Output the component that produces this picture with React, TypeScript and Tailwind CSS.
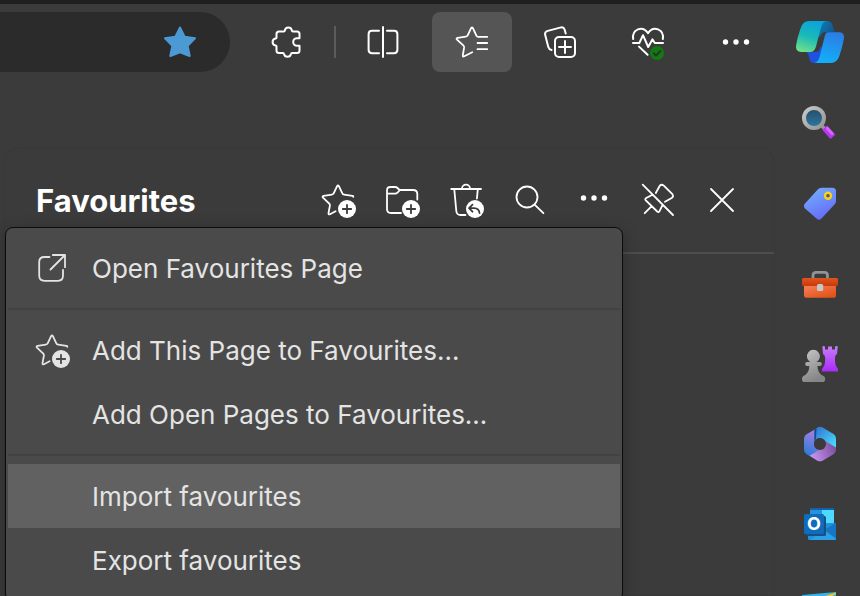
import type { ReactNode } from 'react';

const Icon = ({ children, width = 1.8 }: { children: ReactNode; width?: number }) => (
  <svg
    viewBox="0 0 40 40"
    className="size-10 shrink-0"
    fill="none"
    stroke="currentColor"
    strokeWidth={width}
    strokeLinecap="round"
    strokeLinejoin="round"
    aria-hidden="true"
  >
    {children}
  </svg>
);

const AppIcon = ({ children }: { children: ReactNode }) => (
  <svg viewBox="0 0 48 48" className="size-12" aria-hidden="true">
    {children}
  </svg>
);

const StarAdd = ({ plus }: { plus: string }) => (
  <Icon>
    <path d="M35.2 16.8Q35.6 16 34.4 15.8L26.2 14.7Q24.8 14.5 24.2 13.2L20.9 6.2Q20 4.6 19.1 6.2L15.8 13.2Q15.2 14.5 13.8 14.7L5.6 15.9Q3.8 16.3 5 17.6L11 23.3Q12.1 24.2 11.9 25.6L10.5 33.2Q10.3 35 12 34.2L17.6 31.2" />
    <circle cx="29" cy="29" r="9" fill="currentColor" stroke="none" />
    <path d="M29 24.8V33.2M24.8 29H33.2" stroke={plus} />
  </Icon>
);

const Dots = () => (
  <Icon>
    <g fill="currentColor" stroke="none">
      <circle cx="9.5" cy="20" r="2.7" />
      <circle cx="20" cy="20" r="2.7" />
      <circle cx="30.5" cy="20" r="2.7" />
    </g>
  </Icon>
);

const ToolButton = ({ label, active, children }: { label: string; active?: boolean; children: ReactNode }) => (
  <button
    type="button"
    aria-label={label}
    className={
      active
        ? 'flex h-[60px] w-20 shrink-0 items-center justify-center rounded-lg bg-[#555555]'
        : 'flex h-[60px] w-20 shrink-0 items-center justify-center rounded-lg'
    }
  >
    {children}
  </button>
);

const PanelButton = ({ label, children }: { label: string; children: ReactNode }) => (
  <button type="button" aria-label={label} className="flex h-16 w-16 shrink-0 items-center justify-center">
    {children}
  </button>
);

const SideButton = ({ label, children }: { label: string; children: ReactNode }) => (
  <button type="button" aria-label={label} className="shrink-0">
    <AppIcon>{children}</AppIcon>
  </button>
);

const MenuItem = ({ label, icon, active }: { label: string; icon?: ReactNode; active?: boolean }) => (
  <button
    type="button"
    role="menuitem"
    className={
      active
        ? 'flex h-16 w-full items-center gap-5 bg-[#616161] pl-6 text-left'
        : 'flex h-16 w-full items-center gap-5 pl-6 text-left'
    }
  >
    <span className="size-10 shrink-0">{icon}</span>
    <span className="pt-0.5 text-[26px] leading-8 whitespace-nowrap">{label}</span>
  </button>
);

const Separator = () => <hr className="my-2 h-0.5 border-0 bg-[#3f4346]" />;

const Toolbar = () => (
  <div className="flex items-center gap-2 pt-2 pr-1">
    <div className="flex h-[60px] flex-1 items-center justify-end rounded-r-full bg-[#2b2b2b] pr-[30px]">
      <button type="button" aria-label="Edit favourite" className="text-[#4c9ad4]">
        <Icon width={2}>
          <path
            d="M20 5.5L24.6 14.7L35 16.2L27.7 23.8L29.7 34L20 30.2L10.3 34L12.3 23.8L5 16.2L15.4 14.7Z"
            fill="currentColor"
          />
        </Icon>
      </button>
    </div>
    <div className="flex items-center pr-px pl-[9px]">
      <ToolButton label="Extensions">
        <Icon width={2}>
          <path d="M12 9.5H16.8Q17.7 9.5 17.8 8.6A3.6 3.6 0 0 1 24.9 8.6Q25 9.5 25.9 9.5H30Q32.5 9.5 32.5 12V16.2H30A3.8 3.8 0 0 0 30 23.8H32.5V28.5Q32.5 31 30 31H25Q24.1 31 24 31.9A3.6 3.6 0 0 1 17 31.9Q16.9 31 16 31H12Q9.5 31 9.5 28.5V24.6Q9.5 23.7 8.6 23.6A3.6 3.6 0 0 1 8.6 16.5Q9.5 16.4 9.5 15.5V12Q9.5 9.5 12 9.5Z" />
        </Icon>
      </ToolButton>
      <div className="mx-[7px] h-8 w-0.5 bg-[#5c5c5c]" />
      <ToolButton label="Split screen">
        <Icon width={2}>
          <path d="M16 8.8H9Q5.6 8.8 5.6 12.2V27.8Q5.6 31.2 9 31.2H16M24 8.8H31Q34.4 8.8 34.4 12.2V27.8Q34.4 31.2 31 31.2H24M20 5V35" />
        </Icon>
      </ToolButton>
    </div>
    <ToolButton label="Favourites" active>
      <Icon>
        <path d="M35.2 14.9H26.3Q25 14.9 24.4 13.7L20.9 6.2Q20 4.6 19.1 6.2L15.8 13.2Q15.2 14.5 13.8 14.7L5.6 15.9Q3.8 16.3 5 17.6L11.3 23.4Q12.3 24.3 12.1 25.7L10.8 33.4Q10.6 35.2 12.3 34.3L20.2 30.2M25.5 21H35.2M25.5 27.2H35.2" />
      </Icon>
    </ToolButton>
    <ToolButton label="Collections">
      <Icon width={2}>
        <rect x="15" y="15" width="20" height="20" rx="4" />
        <path d="M25 19V31M19 25H31M25.7 11.5L24.6 7.5Q23.7 4.8 21 5.4L7.8 8.9Q4.4 9.9 5.2 13L8.3 25Q9 27.5 11.6 28" />
      </Icon>
    </ToolButton>
    <ToolButton label="Browser essentials">
      <Icon width={2}>
        <path d="M5.2 17C3.6 7.2 14.6 3 20 11.2C25.4 3 36.4 7.2 34.8 17M5 21H11.3L15 13.2L20.2 25L24.4 17.4L26.8 21H35M11 24.6L19.6 32.8" />
        <circle cx="29" cy="31" r="7" fill="#107c10" stroke="none" />
        <path d="M25.7 31.2L28 33.5L32.5 29" stroke="#303030" />
      </Icon>
    </ToolButton>
    <ToolButton label="Settings and more">
      <Dots />
    </ToolButton>
  </div>
);

const PanelHeader = () => (
  <div className="flex h-[106px] items-center border-b-2 border-[#4d4d4d] pr-5 pl-[31px]">
    <h1 className="flex-1 pt-0.5 text-[31px] leading-10 font-bold">Favourites</h1>
    <PanelButton label="Add this page to favourites">
      <StarAdd plus="#3b3b3b" />
    </PanelButton>
    <PanelButton label="Add folder">
      <Icon>
        <path d="M19 33H9Q5 33 5 29V10.5Q5 7 8.5 7H13Q14.5 7 15.5 8L17.5 10H31Q35.3 10 35.3 14V19.5M5.2 13.6H13Q14.5 13.6 15.5 12.6L18 10" />
        <circle cx="29" cy="29" r="9" fill="currentColor" stroke="none" />
        <path d="M29 24.8V33.2M24.8 29H33.2" stroke="#3b3b3b" />
      </Icon>
    </PanelButton>
    <PanelButton label="Restore deleted favourites">
      <Icon>
        <path d="M5.2 9H35M16 8.6A4 4 0 0 1 24 8.6M8.3 9.4L10.3 31Q10.7 35 14.5 35H19.5M31.8 9.4L30.9 18.5" />
        <circle cx="29" cy="29" r="9" fill="currentColor" stroke="none" />
        <path d="M26.5 24.7L23 28.2L26.5 31.7M23.2 28.2H28Q33 28.4 33.5 33" stroke="#3b3b3b" />
      </Icon>
    </PanelButton>
    <PanelButton label="Search favourites">
      <Icon>
        <circle cx="17" cy="17" r="10.5" />
        <path d="M24.6 24.6L33.4 33.2" />
      </Icon>
    </PanelButton>
    <PanelButton label="More options">
      <span className="pb-1">
        <Dots />
      </span>
    </PanelButton>
    <PanelButton label="Unpin favourites">
      <Icon>
        <path d="M4.7 4.7L35 35M17.8 13L21.5 6.2Q23.2 3.6 25.8 5.6L34.4 14.2Q36 16.4 33.7 18L27 21.8M13.5 15.2L8.2 18Q6.6 19 7.8 20.3L19.2 31.5Q20.7 32.7 21.5 31.2L24.5 25.2M6.7 33.2L13.7 26.2" />
      </Icon>
    </PanelButton>
    <PanelButton label="Close">
      <Icon>
        <path d="M9 9L31 31M31 9L9 31" />
      </Icon>
    </PanelButton>
  </div>
);

const FavouritesMenu = () => (
  <div
    role="menu"
    className="absolute top-[79px] left-0 w-[618px] rounded-lg border border-[#0c0c0c] bg-[#4a4a4a] px-0.5 py-2 text-[#e4e4e4] shadow-[0_4px_16px_rgba(0,0,0,0.3)]"
  >
    <MenuItem
      label="Open Favourites Page"
      icon={
        <Icon>
          <path d="M17.5 9H12.5Q7.2 9 7.2 14V27.5Q7.2 32.8 12.5 32.8H26Q31 32.8 31 27.5V21.8M20.8 7H33V19.2M33 7L18.5 21.5" />
        </Icon>
      }
    />
    <Separator />
    <MenuItem label="Add This Page to Favourites…" icon={<StarAdd plus="#4a4a4a" />} />
    <MenuItem label="Add Open Pages to Favourites…" />
    <Separator />
    <MenuItem label="Import favourites" active />
    <MenuItem label="Export favourites" />
  </div>
);

const Sidebar = () => (
  <nav aria-label="Sidebar" className="flex w-20 shrink-0 flex-col items-center gap-8 pt-3.5">
    <SideButton label="Copilot">
      <defs>
        <linearGradient id="cp-left" x1="0.6" y1="0" x2="0.3" y2="1">
          <stop offset="0" stopColor="#0aa4dc" />
          <stop offset="0.5" stopColor="#19b9b8" />
          <stop offset="1" stopColor="#6be08a" />
        </linearGradient>
        <linearGradient id="cp-right" x1="0.6" y1="0" x2="0.4" y2="1">
          <stop offset="0" stopColor="#2b7de4" />
          <stop offset="1" stopColor="#12b0f8" />
        </linearGradient>
        <linearGradient id="cp-top" x1="0" y1="0" x2="1" y2="0.6">
          <stop offset="0" stopColor="#0a86bd" />
          <stop offset="1" stopColor="#14548c" />
        </linearGradient>
      </defs>
      <path d="M25 3H31C37 3 36.5 9 39 14.3H29C26 14.3 25 16 24 19L20 15Z" fill="url(#cp-top)" />
      <path d="M10 34H20C23 34 24 31 25 28L28 33L22 45H18C13 45 13.5 39 12 35.5Z" fill="#1f51df" />
      <path d="M30.5 14.3H43Q49 14.5 47.8 21C46.5 28 45 33 43.3 38Q41 45 35 45H18.5C22 44 23 41 24 37.5L28.5 19Q29.3 14.5 32.5 14.3Z" fill="url(#cp-right)" />
      <path d="M13 3H30C27 4 26 6 25 9.5L20 28.5Q18.5 34 14 34H5Q-1 33.5 .2 27C1.5 20 3 15 4.7 10Q7 3 13 3Z" fill="url(#cp-left)" />
    </SideButton>
    <SideButton label="Search">
      <defs>
        <linearGradient id="lens" x1="0" y1="0" x2="0" y2="1">
          <stop offset="0" stopColor="#244b66" />
          <stop offset="1" stopColor="#2f7ba3" />
        </linearGradient>
        <linearGradient id="rim" x1="0" y1="0" x2="1" y2="1">
          <stop offset="0" stopColor="#c8c8c8" />
          <stop offset="1" stopColor="#949494" />
        </linearGradient>
      </defs>
      <path d="M25 27L30 32" stroke="#9a9a9a" strokeWidth="3.5" />
      <circle cx="18" cy="20" r="10" fill="url(#lens)" stroke="url(#rim)" strokeWidth="4" />
      <path d="M30.8 32L34.7 36.4" stroke="#b637ef" strokeWidth="6.5" strokeLinecap="square" />
      <path d="M31.3 30.4L36 35.6" stroke="#d765ff" strokeWidth="3" strokeLinecap="round" />
    </SideButton>
    <SideButton label="Shopping">
      <defs>
        <linearGradient id="tag" x1="0.2" y1="0" x2="0.7" y2="1">
          <stop offset="0" stopColor="#73b0ff" />
          <stop offset="1" stopColor="#6467f4" />
        </linearGradient>
      </defs>
      <path d="M25.5 9.7H36.5Q40 9.7 40 13.2V23Q40 25 38.5 26.5L25.5 40.5Q23 43 20.5 40.5L9 30.5Q6.8 28 9 25.5L22 11.3Q23.5 9.7 25.5 9.7Z" fill="url(#tag)" />
      <circle cx="32" cy="17.8" r="3" fill="#4b5a80" stroke="#fcd116" strokeWidth="2.4" />
    </SideButton>
    <SideButton label="Tools">
      <defs>
        <linearGradient id="box" x1="0" y1="0" x2="0.7" y2="1">
          <stop offset="0" stopColor="#f98260" />
          <stop offset="1" stopColor="#e25318" />
        </linearGradient>
        <linearGradient id="lid" x1="0" y1="0" x2="0" y2="1">
          <stop offset="0" stopColor="#e0551c" />
          <stop offset="1" stopColor="#c53a0c" />
        </linearGradient>
      </defs>
      <path d="M17 21V17.5Q17 14.4 20 14.4H28.5Q31.5 14.4 31.5 17.5V21" fill="none" stroke="#8f9496" strokeWidth="2.8" />
      <rect x="8" y="26" width="32" height="13.8" rx="2.5" fill="url(#box)" />
      <rect x="6" y="20" width="36" height="8" rx="1.5" fill="url(#lid)" />
      <rect x="21" y="26" width="6.2" height="7" rx="1.5" fill="#c3c9cb" />
    </SideButton>
    <SideButton label="Games">
      <defs>
        <linearGradient id="rook" x1="0" y1="0" x2="0" y2="1">
          <stop offset="0" stopColor="#c77dfa" />
          <stop offset="1" stopColor="#aa2af8" />
        </linearGradient>
        <linearGradient id="pawn" x1="0" y1="0" x2="0.4" y2="1">
          <stop offset="0" stopColor="#c6c6c6" />
          <stop offset="1" stopColor="#868686" />
        </linearGradient>
      </defs>
      <path d="M26.3 8.5Q28.6 7.5 29 9V11.5H32V8.5H36V11.5H39V9Q39.4 7.5 41.8 8.5L41 16Q38.8 17.2 39 20Q39 26 40 28L42 31V33.5H26V31L28 28Q29.2 26 29.2 20Q29 17 27 16Z" fill="url(#rook)" />
      <path d="M14.2 24A6.5 6.5 0 1 1 20.6 24H24Q25.8 24 25.8 26Q25.8 28 24 28H21.5Q21.5 34 25.5 37Q29.2 38 29.2 41.2Q29.2 44 26.5 44H8.5Q6 44 6 41.2Q6 38 9.3 37Q13.3 34 13.3 28H11Q9.2 28 9.2 26Q9.2 24 11 24Z" fill="url(#pawn)" />
    </SideButton>
    <SideButton label="Microsoft 365">
      <defs>
        <linearGradient id="ms-a" x1="0.5" y1="0" x2="0.2" y2="1">
          <stop offset="0" stopColor="#ae7fe2" />
          <stop offset="1" stopColor="#267bd9" />
        </linearGradient>
        <linearGradient id="ms-b" x1="0" y1="0" x2="1" y2="1">
          <stop offset="0" stopColor="#2f6fd0" />
          <stop offset="1" stopColor="#4de2ff" />
        </linearGradient>
        <linearGradient id="ms-c" x1="0" y1="0.6" x2="1" y2="0.3">
          <stop offset="0" stopColor="#c895f1" />
          <stop offset="1" stopColor="#7a4d9c" />
        </linearGradient>
      </defs>
      <path d="M20 10.8L10.5 16.2Q8 17.8 8 20.5V32Q8 34.8 10.5 36.2L13.5 38L25 32L18.5 29V12Z" fill="url(#ms-a)" />
      <path d="M13.5 37.8L24 31.5L29 22.5L40 29V32Q40 34.8 37.5 36.2L27 42.5Q24 44.2 21 42.5Z" fill="url(#ms-c)" />
      <path d="M18.5 25V13Q18.7 11.2 21 9.8Q24 7.8 27 9.8L37.5 16Q40 17.5 40 20.5V29.5L29.5 23.2L24 20Q20 20 18.5 25Z" fill="url(#ms-b)" />
      <path d="M18.5 12Q19 11 20.5 10.2L20 21L18.5 26Z" fill="#174c94" />
      <circle cx="24" cy="26" r="6" fill="#3b3b3b" />
    </SideButton>
    <SideButton label="Outlook">
      <rect x="14" y="10" width="24" height="20" rx="1.5" fill="#2893dd" />
      <path d="M26 12H38V25H26Z" fill="#50d9ff" />
      <path d="M14 10H38V12H14Z" fill="#0f62ad" />
      <path d="M12 30L40 25V40.5Q40 42 38.5 42H13.5Q12 42 12 40.5Z" fill="#1e91de" />
      <path d="M40 25V40L28 32Z" fill="#1675c4" />
      <path d="M28 32L40 41.5Q39.5 42 38.5 42H14Z" fill="#2ba0e8" />
      <rect x="10" y="18" width="20" height="20" rx="1.5" fill="#17527f" />
      <rect x="8" y="16" width="20" height="20" rx="1.5" fill="#0f6cbd" />
      <text x="18" y="32" textAnchor="middle" fontFamily="Inter, sans-serif" fontSize="18" fontWeight="700" fill="#fff">O</text>
    </SideButton>
    <SideButton label="Drop">
      <path d="M6 17L40 14V44H6Z" fill="#35b3ea" />
      <path d="M24 20L32 17L40 14.5V16L32 20Z" fill="#f6c324" />
    </SideButton>
  </nav>
);

export default function App() {
  return (
    <div className="h-screen overflow-hidden border-t-4 border-[#1f1f1f] bg-[#3b3b3b] font-['Inter',sans-serif] text-white">
      <div className="flex h-full">
        <main className="flex min-w-0 flex-1 flex-col">
          <Toolbar />
          <section className="relative mt-[75px] mr-[5px] ml-1 flex-1 rounded-t-2xl border border-[#383838]">
            <PanelHeader />
            <FavouritesMenu />
          </section>
        </main>
        <Sidebar />
      </div>
    </div>
  );
}
